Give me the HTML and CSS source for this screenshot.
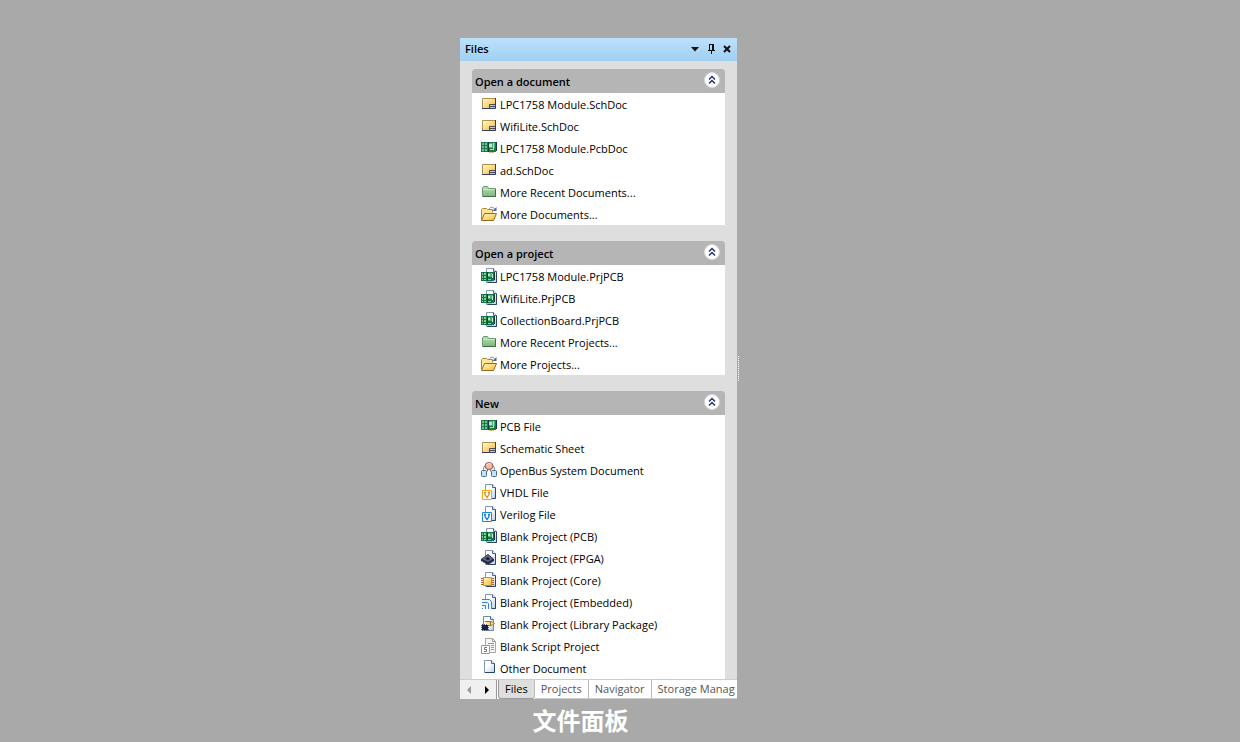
FILE: index.html
```html
<!DOCTYPE html>
<html lang="zh">
<head>
<meta charset="utf-8">
<title>文件面板</title>
<link rel="stylesheet" href="styles.css">
</head>
<body>
<svg class="sprite" aria-hidden="true">
  <defs>
    <linearGradient id="gold" x1="0" y1="0" x2="1" y2="1"><stop offset="0" stop-color="#fffbd0"/><stop offset="1" stop-color="#f3b92f"/></linearGradient>
    <linearGradient id="leaf" x1="0" y1="0" x2="0" y2="1"><stop offset="0" stop-color="#b5e0b2"/><stop offset="1" stop-color="#7db77d"/></linearGradient>
    <linearGradient id="paper" x1="0" y1="0" x2="1" y2="1"><stop offset="0.4" stop-color="#ffffff"/><stop offset="1" stop-color="#b9cde8"/></linearGradient>
    <symbol id="page" viewBox="0 0 16 16">
      <path d="M4.500 .5h7l3 3v11h-10z" fill="url(#paper)" stroke="#8298bb"/>
      <path d="M14.500 3.500v11h-9" fill="none" stroke="#29456f"/>
      <path d="M11.500 .5v3h3" fill="#e8effa" stroke="#4b648d"/>
    </symbol>
    <symbol id="sch" viewBox="0 0 16 16">
      <path d="M1.500 2.500h13v10h-13z" fill="url(#gold)" stroke="#b28f4d"/>
      <path d="M14.500 2v10.500H1" fill="none" stroke="#363b62"/>
      <path d="M8.500 12V8.500H14M9 10.500h5" fill="none" stroke="#4a4855"/>
    </symbol>
    <symbol id="pcb" viewBox="0 0 16 16">
      <path d="M0 2h15v10h-2v1h-5v-1H0z" fill="#1b7a4c"/>
      <path d="M1 3h2v2H1zM4 3h2v2H4zM1 6h2v2H1zM4 6h2v2H4zM1 9h2v2H1zM4 9h2v2H4z" fill="#6cc48b"/>
      <path d="M8 3h6v5H8z" fill="#4fb074"/>
      <path d="M8 4h3v3H8z" fill="#c9e2cb"/>
      <path d="M12 3h1v6h-1zM9 9h4v1H9z" fill="#a4e6ae"/>
      <path d="M7.500 2v10M15.500 2v9" stroke="#123c3b"/>
      <path d="M8 12h5v1H8z" fill="#dfbd58"/>
    </symbol>
    <symbol id="folder" viewBox="0 0 16 16">
      <path d="M1.500 12.500v-9l1-1h4l1 2h7v8z" fill="url(#leaf)" stroke="#6c9a70"/>
      <path d="M14.500 5v7.500H2" fill="none" stroke="#416d49"/>
      <path d="M2.500 5.500h11" stroke="#c9eac4"/>
    </symbol>
    <symbol id="open" viewBox="0 0 16 16">
      <path d="M.5 13.500v-10l1-1h4l1 1h5v3" fill="#ffe79b" stroke="#b5832b"/>
      <path d="M.5 14.500l3-7h12l-3 7z" fill="url(#gold)" stroke="#9b681c"/>
      <path d="M8.500 2.500c2-2 4-1.500 5 .5" fill="none" stroke="#6484b5"/>
      <path d="M15.500 1v4h-4z" fill="#46679d"/>
    </symbol>
    <symbol id="prj" viewBox="0 0 16 16">
      <path d="M5.500 .5h7l3 3v11h-10z" fill="url(#paper)" stroke="#8298bb"/>
      <path d="M15.500 3.500v11h-9" fill="none" stroke="#29456f"/>
      <path d="M12.500 .5v3h3" fill="#e8effa" stroke="#4b648d"/>
      <path d="M0 4h13v9h-2v1H6v-1H0z" fill="#187247"/>
      <path d="M1 5h1v2H1zM3 5h2v2H3zM1 8h1v2H1zM3 8h2v2H3zM1 11h1v1H1zM3 11h2v1H3zM7 11h3v1H7z" fill="#7dcf98"/>
      <path d="M7 5h5v4H7z" fill="#4fb074"/>
      <path d="M7 6h2v2H7zM11 6h1v4h-1z" fill="#c2e4c5"/>
      <path d="M6.500 4v9M13.500 4v8" stroke="#123d38"/>
      <path d="M6 13h5v1H6z" fill="#d3b94f"/>
    </symbol>
    <symbol id="bus" viewBox="0 0 16 16">
      <path d="M4.500 3.500c-2 1-2 3-2 6M11.500 3.500c2 1 2 3 2 6M6.500 7v2.500M9.500 7v2.500" fill="none" stroke="#6d7b87"/>
      <ellipse cx="8" cy="4" rx="4" ry="3.500" fill="#f8b6a0" stroke="#91564e"/>
      <path d="M5.500 3c1-1.500 3-2 4.500-1" fill="none" stroke="#ffe8dc"/>
      <rect x=".5" y="8.500" width="5" height="6" rx="1" fill="#c5e4f7" stroke="#466c8b"/>
      <rect x="10.500" y="8.500" width="5" height="6" rx="1" fill="#c5e4f7" stroke="#466c8b"/>
    </symbol>
    <symbol id="vhdl" viewBox="0 0 16 16">
      <use href="#page"/>
      <path d="M1.500 6.500h9v9h-9z" fill="#fff" stroke="#f1a51c"/>
      <path d="M3 8.500h2M7 8.500h2M4 9v1.500l2 3 2-3V9" fill="none" stroke="#e0901a" stroke-width="1.300"/>
    </symbol>
    <symbol id="verilog" viewBox="0 0 16 16">
      <use href="#page"/>
      <path d="M1.500 6.500h9v9h-9z" fill="#fff" stroke="#1687e4"/>
      <path d="M3 8.500h2M7 8.500h2M4 9v1.500l2 3 2-3V9" fill="none" stroke="#1678d4" stroke-width="1.300"/>
    </symbol>
    <symbol id="fpga" viewBox="0 0 16 16">
      <use href="#page"/>
      <path d="M0 9l7-5 6 5v2l-6 4-7-4z" fill="#24283f"/>
      <path d="M1 9l6-4 5 4-5 3z" fill="#646b88"/>
      <path d="M4 8.500L7 7l2 2-2 1.500z" fill="#151b31"/>
      <path d="M1 11l6 4 5-3.500" fill="none" stroke="#8c98b0" stroke-dasharray="1 1"/>
    </symbol>
    <symbol id="core" viewBox="0 0 16 16">
      <use href="#page"/>
      <path d="M0 6.500h13M0 8.500h13M0 10.500h13M0 12.500h13" stroke="#a35a25"/>
      <path d="M2.500 5.500h8v8h-8z" fill="url(#gold)" stroke="#d28a21"/>
    </symbol>
    <symbol id="embedded" viewBox="0 0 16 16">
      <use href="#page"/>
      <path d="M1 5h10v10H1z" fill="#eef6ff"/>
      <path d="M1 5.500h7.500l2 2V15M1 8.500h5.500l1 1V15M1 11.500h3.500V15M1 14.500h1" fill="none" stroke="#3681dc"/>
    </symbol>
    <symbol id="library" viewBox="0 0 16 16">
      <path d="M2.500 .5h7l3 3v11h-10z" fill="url(#paper)" stroke="#7088ae"/>
      <path d="M9.500 .5v3h3" fill="#fff" stroke="#4b648d"/>
      <path d="M4 5.500h5c2 0 3 1 4.500 2-1.500 1-2.500 2-4.500 2H8" fill="#ffd981" stroke="#a66a22"/>
      <path d="M9.500 5.500v4" stroke="#a66a22"/>
      <path d="M0 9.500h8M0 11.500h8M0 13.500h8M1.500 8v7M3.500 8v7M5.500 8v7" stroke="#596480"/>
      <path d="M1 9h6v5H1z" fill="#19213c"/>
    </symbol>
    <symbol id="script" viewBox="0 0 16 16">
      <path d="M4.500 .5h7l3 3v11h-10z" fill="#f5f5f5" stroke="#aaa"/>
      <path d="M11.500 .5v3h3M7 5.500h6M10 7.500h3M10 9.500h3M10 11.500h3" fill="none" stroke="#999"/>
      <path d="M.5 7.500h8v8h-8z" fill="#fff" stroke="#999"/>
      <path d="M6 9.500H3.500v2h2v2H3" fill="none" stroke="#777"/>
    </symbol>
    <symbol id="blank" viewBox="0 0 16 16">
      <path d="M3.500 .5h7l3 3v9h-10z" fill="url(#paper)" stroke="#8298bb"/>
      <path d="M13.500 3.500v9H4" fill="none" stroke="#29456f"/>
      <path d="M10.500 .5v3h3" fill="#e8effa" stroke="#4b648d"/>
    </symbol>
    <symbol id="collapse" viewBox="0 0 16 16">
      <circle cx="8" cy="8" r="7.500" fill="#fff" stroke="#d8d8df"/>
      <path d="M5 7.500l3-3 3 3M5 11.500l3-3 3 3" fill="none" stroke="#25356f" stroke-width="1.500"/>
    </symbol>
  </defs>
</svg>
<figure class="stage">
  <section class="panel" aria-label="Files">
    <header class="titlebar">
      <h1 class="title">Files</h1>
      <button class="tool" aria-label="Menu"><svg class="glyph" viewBox="0 0 10 10"><path d="M1 3h8L5 7.500z" fill="#111"/></svg></button>
      <button class="tool" aria-label="Pin"><svg class="glyph" viewBox="0 0 10 10"><path d="M3 .5h5M3.500 1v5M2 6.500h7M5.500 7v3" fill="none" stroke="#111"/><path d="M6 1h2v5H6z" fill="#111"/></svg></button>
      <button class="tool" aria-label="Close"><svg class="glyph" viewBox="0 0 10 10"><path d="M2 2l6 6M8 2L2 8" stroke="#111" stroke-width="2"/></svg></button>
    </header>
    <div class="content">
      <section class="group">
        <header class="group-head"><h2 class="group-title">Open a document</h2><button class="collapse" aria-label="Collapse Open a document"><svg class="icon"><use href="#collapse"/></svg></button></header>
        <ul class="list">
          <li><a class="row" href="#"><svg class="icon"><use href="#sch"/></svg><span class="label">LPC1758 Module.SchDoc</span></a></li>
          <li><a class="row" href="#"><svg class="icon"><use href="#sch"/></svg><span class="label">WifiLite.SchDoc</span></a></li>
          <li><a class="row" href="#"><svg class="icon"><use href="#pcb"/></svg><span class="label">LPC1758 Module.PcbDoc</span></a></li>
          <li><a class="row" href="#"><svg class="icon"><use href="#sch"/></svg><span class="label">ad.SchDoc</span></a></li>
          <li><a class="row" href="#"><svg class="icon"><use href="#folder"/></svg><span class="label">More Recent Documents...</span></a></li>
          <li><a class="row" href="#"><svg class="icon"><use href="#open"/></svg><span class="label">More Documents...</span></a></li>
        </ul>
      </section>
      <section class="group">
        <header class="group-head"><h2 class="group-title">Open a project</h2><button class="collapse" aria-label="Collapse Open a project"><svg class="icon"><use href="#collapse"/></svg></button></header>
        <ul class="list">
          <li><a class="row" href="#"><svg class="icon"><use href="#prj"/></svg><span class="label">LPC1758 Module.PrjPCB</span></a></li>
          <li><a class="row" href="#"><svg class="icon"><use href="#prj"/></svg><span class="label">WifiLite.PrjPCB</span></a></li>
          <li><a class="row" href="#"><svg class="icon"><use href="#prj"/></svg><span class="label">CollectionBoard.PrjPCB</span></a></li>
          <li><a class="row" href="#"><svg class="icon"><use href="#folder"/></svg><span class="label">More Recent Projects...</span></a></li>
          <li><a class="row" href="#"><svg class="icon"><use href="#open"/></svg><span class="label">More Projects...</span></a></li>
        </ul>
      </section>
      <section class="group">
        <header class="group-head"><h2 class="group-title">New</h2><button class="collapse" aria-label="Collapse New"><svg class="icon"><use href="#collapse"/></svg></button></header>
        <ul class="list">
          <li><a class="row" href="#"><svg class="icon"><use href="#pcb"/></svg><span class="label">PCB File</span></a></li>
          <li><a class="row" href="#"><svg class="icon"><use href="#sch"/></svg><span class="label">Schematic Sheet</span></a></li>
          <li><a class="row" href="#"><svg class="icon"><use href="#bus"/></svg><span class="label">OpenBus System Document</span></a></li>
          <li><a class="row" href="#"><svg class="icon"><use href="#vhdl"/></svg><span class="label">VHDL File</span></a></li>
          <li><a class="row" href="#"><svg class="icon"><use href="#verilog"/></svg><span class="label">Verilog File</span></a></li>
          <li><a class="row" href="#"><svg class="icon"><use href="#prj"/></svg><span class="label">Blank Project (PCB)</span></a></li>
          <li><a class="row" href="#"><svg class="icon"><use href="#fpga"/></svg><span class="label">Blank Project (FPGA)</span></a></li>
          <li><a class="row" href="#"><svg class="icon"><use href="#core"/></svg><span class="label">Blank Project (Core)</span></a></li>
          <li><a class="row" href="#"><svg class="icon"><use href="#embedded"/></svg><span class="label">Blank Project (Embedded)</span></a></li>
          <li><a class="row" href="#"><svg class="icon"><use href="#library"/></svg><span class="label">Blank Project (Library Package)</span></a></li>
          <li><a class="row" href="#"><svg class="icon"><use href="#script"/></svg><span class="label">Blank Script Project</span></a></li>
          <li><a class="row" href="#"><svg class="icon"><use href="#blank"/></svg><span class="label">Other Document</span></a></li>
        </ul>
      </section>
    </div>
    <nav class="tabs">
      <div class="scrollers">
        <button class="scroll" aria-label="Previous tabs"><svg class="arrow" viewBox="0 0 6 8"><path d="M5 0v8L1 4z" fill="#999"/></svg></button>
        <button class="scroll" aria-label="Next tabs"><svg class="arrow" viewBox="0 0 6 8"><path d="M1 0v8l4-4z" fill="#000"/></svg></button>
      </div>
      <button class="tab tab-active">Files</button>
      <button class="tab">Projects</button>
      <button class="tab">Navigator</button>
      <button class="tab tab-last">Storage Manag</button>
    </nav>
  </section>
  <span class="grip"></span>
  <figcaption class="caption">文件面板</figcaption>
</figure>
</body>
</html>
```
FILE: styles.css
```css
* { box-sizing: border-box; }
body {
  margin: 0;
  background: #a9a9a9;
  color: #000;
  font: 11px/16px "Open Sans", "Noto Sans", sans-serif;
}
.sprite { position: absolute; width: 0; height: 0; }
button { border: 0; padding: 0; background: none; font: inherit; color: inherit; }
.stage {
  display: grid;
  grid-template-columns: 277px auto;
  justify-content: start;
  margin: 38px 0 0;
  padding-left: 460px;
}
.panel { min-width: 0; background: #dedede; }
.titlebar {
  display: flex;
  align-items: center;
  gap: 6px;
  height: 23px;
  padding: 0 5px 1px;
  background: linear-gradient(#bce1fc, #a0d0f1);
}
.title { flex: 1; margin: 0; font-size: 11px; line-height: 16px; font-weight: 600; }
.tool { display: flex; }
.glyph { width: 10px; height: 10px; }
.content { display: flex; flex-direction: column; gap: 16px; padding: 8px 12px 0; }
.group { background: #fff; border-radius: 3px 3px 0 0; }
.group-head {
  display: flex;
  align-items: flex-start;
  justify-content: space-between;
  height: 24px;
  padding: 3px 5px 0 3px;
  background: #b5b5b5;
  border-radius: 3px 3px 0 0;
}
.group-title { margin: 0; padding-top: 2px; font-size: 11px; line-height: 16px; font-weight: 600; }
.collapse { display: flex; }
.icon { width: 16px; height: 16px; flex: none; }
.list { margin: 0; padding: 0; list-style: none; }
.row {
  display: flex;
  align-items: flex-start;
  gap: 3px;
  height: 22px;
  padding: 3px 9px 0;
  color: inherit;
  text-decoration: none;
}
.label { padding-top: 1px; white-space: nowrap; }
.tabs {
  display: flex;
  height: 20px;
  overflow: hidden;
  background: #fff;
  border-top: 1px solid #ccc;
}
.scrollers {
  display: flex;
  flex: none;
  align-items: center;
  justify-content: center;
  gap: 12px;
  width: 37px;
  background: #f0f0f0;
  border-right: 1px solid #999;
}
.scroll { display: flex; }
.arrow { width: 6px; height: 8px; }
.tab {
  flex: none;
  padding: 0 6px;
  color: #555;
  border-right: 1px solid #bbb;
  border-bottom: 1px solid #ccc;
}
.tab-active {
  margin-left: 1px;
  color: #000;
  background: #dedede;
  border-left: 1px solid #999;
  border-bottom-color: #999;
  border-radius: 0 0 3px 3px;
}
.tab-last {
  flex: 1;
  padding-right: 0;
  border-right: 0;
  text-align: left;
  white-space: nowrap;
}
.grip {
  align-self: center;
  width: 1px;
  height: 26px;
  margin: 0 0 0 1px;
  background: repeating-linear-gradient(#fff 0 1px, #a9a9a9 1px 2px);
}
.caption {
  padding: 3px 36px 0 0;
  color: #fff;
  text-align: center;
  font: bold 24px/36px "Noto Sans CJK SC", sans-serif;
}
```
